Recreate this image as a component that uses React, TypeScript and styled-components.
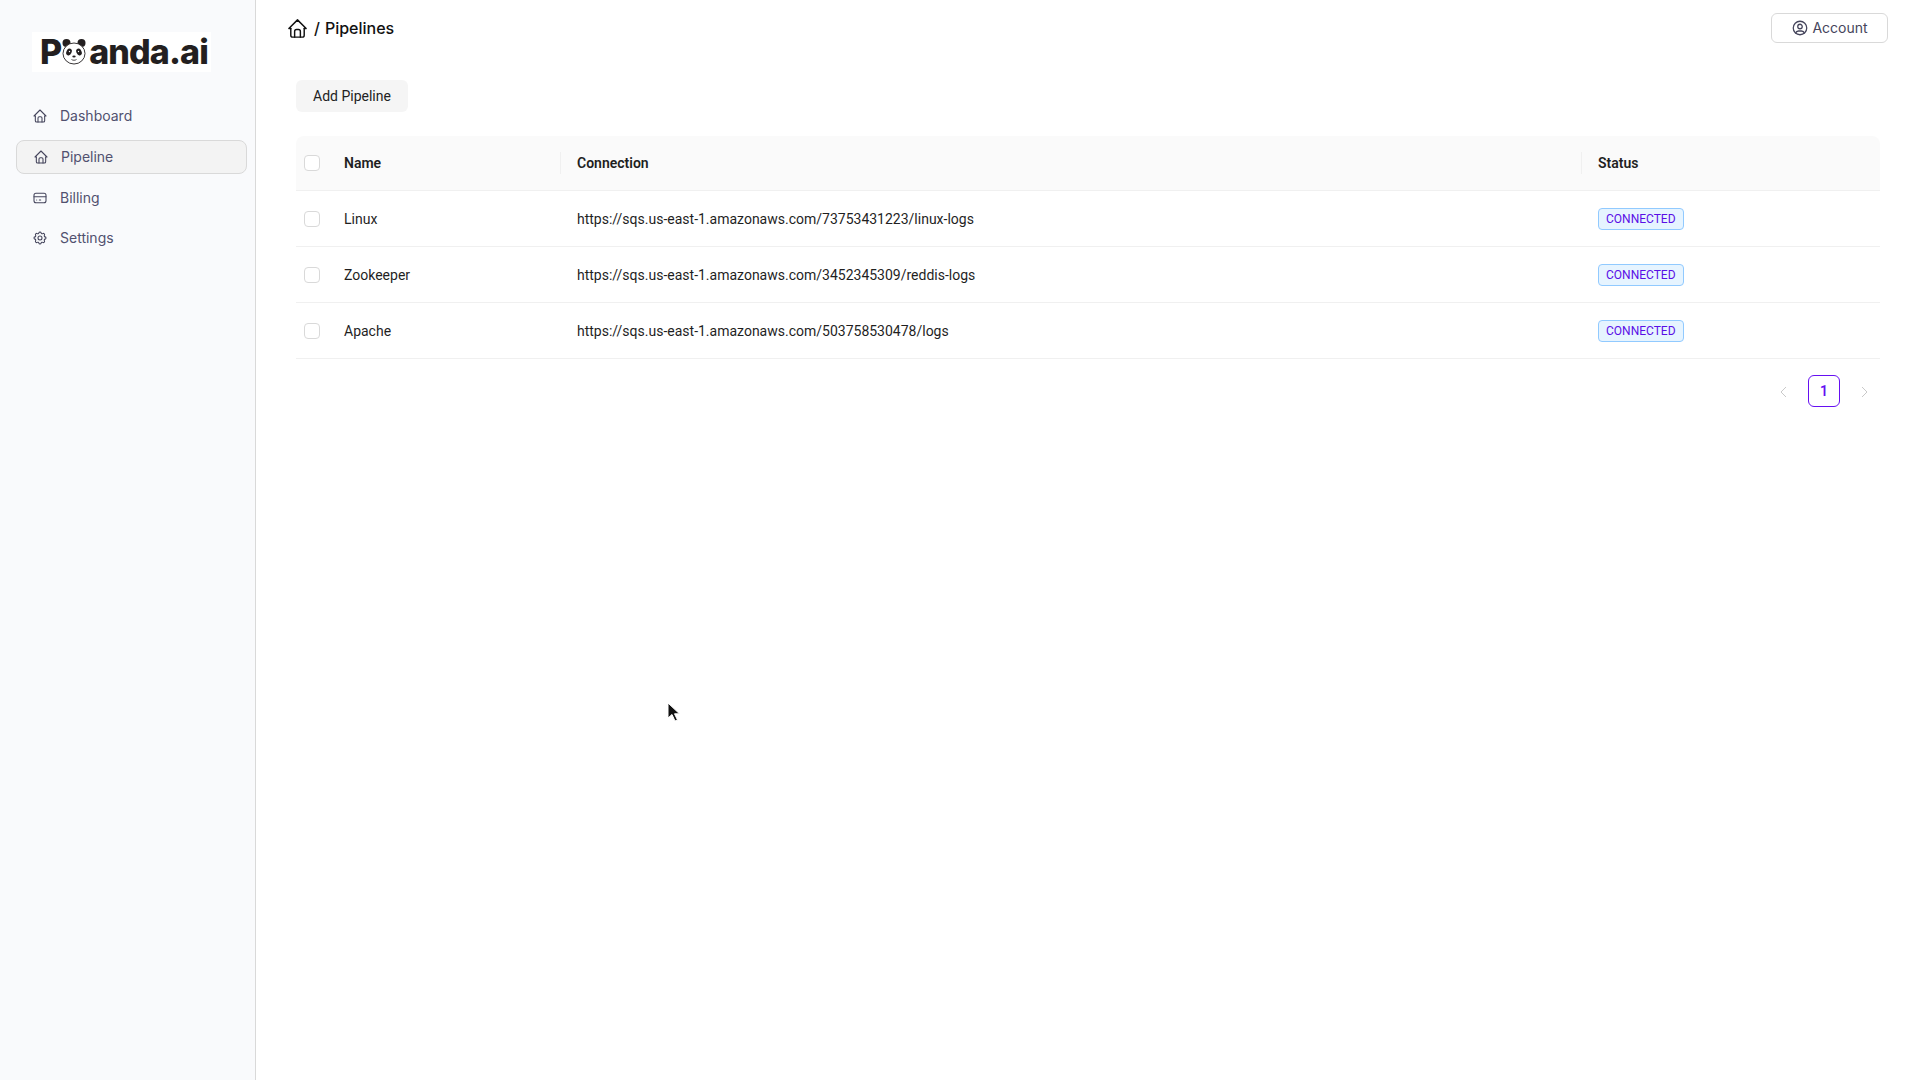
import styled, { createGlobalStyle } from 'styled-components'
import { TbCreditCard, TbHome, TbSettings, TbUserCircle } from 'react-icons/tb'

const GlobalStyle = createGlobalStyle`
  html, body {
    margin: 0;
    height: 100%;
    background: #fff;
    font-family: Roboto, "Liberation Sans", sans-serif;
  }
  * {
    box-sizing: border-box;
  }
`

const Page = styled.div`
  display: flex;
  position: relative;
  height: 1080px;
  overflow: hidden;
`

const Sidebar = styled.aside`
  width: 256px;
  flex: none;
  padding: 32px 8px 0 16px;
  background: #f9fafc;
  border-right: 1px solid #d9d9d9;
`

const LogoBox = styled.div`
  display: flex;
  align-items: center;
  width: 179px;
  height: 40px;
  margin: 0 0 27px 16px;
  padding-left: 8px;
  background: #fff;
  color: #231f20;
  font: 800 34px/40px Inter, sans-serif;
  letter-spacing: -0.9px;
`

const PandaIcon = styled.svg`
  width: 26px;
  height: 27px;
  margin: -1px 2px 0 0;
  flex: none;
`

const Nav = styled.nav`
  display: flex;
  flex-direction: column;
  gap: 7px;
`

const NavItem = styled.a<{ $active?: boolean }>`
  display: flex;
  align-items: center;
  gap: 12px;
  height: 34px;
  padding-left: ${p => (p.$active ? '16px' : '15px')};
  border: 1px solid ${p => (p.$active ? '#d9d9d9' : 'transparent')};
  border-radius: 8px;
  background: ${p => (p.$active ? '#f3f3f3' : 'transparent')};
  color: #51516f;
  font: 400 14px/20px Inter, sans-serif;
  &:last-child {
    margin-top: -1px;
  }
  svg {
    flex: none;
    width: 16px;
    height: 16px;
    color: #45455c;
    stroke-width: 1.6;
  }
`

const Main = styled.main`
  flex: 1;
  min-width: 0;
  display: flex;
  flex-direction: column;
  padding: 13px 40px 0;
`

const TopBar = styled.header`
  display: flex;
  align-items: center;
  justify-content: space-between;
  height: 30px;
`

const Crumbs = styled.div`
  display: flex;
  align-items: center;
  gap: 5px;
  margin-left: -10px;
  color: #111;
  font: 500 16px/24px Inter, sans-serif;
  svg {
    width: 23px;
    height: 23px;
    stroke-width: 1.5;
  }
`

const AccountButton = styled.button`
  display: flex;
  align-items: center;
  justify-content: center;
  gap: 3px;
  width: 117px;
  height: 30px;
  margin-right: -8px;
  padding: 0;
  border: 1px solid #d9d9d9;
  border-radius: 6px;
  background: #fff;
  color: #45455c;
  font: 400 14px/20px Inter, sans-serif;
  svg {
    width: 18px;
    height: 18px;
    stroke-width: 1.7;
  }
`

const AddButton = styled.button`
  width: 112px;
  height: 32px;
  margin: 37px 0 24px;
  padding: 0;
  border: 0;
  border-radius: 6px;
  background: #f5f5f5;
  color: #222;
  font: 400 14px/22px Roboto, sans-serif;
`

const Table = styled.div`
  display: flex;
  flex-direction: column;
  color: #1f1f1f;
  font: 400 14px/22px Roboto, sans-serif;
`

const Row = styled.div<{ $head?: boolean }>`
  display: grid;
  grid-template-columns: 32px 233px 1021px 1fr;
  align-items: center;
  height: ${p => (p.$head ? '55px' : '56px')};
  border-bottom: 1px solid #f0f0f0;
  background: ${p => (p.$head ? '#fafafa' : '#fff')};
  border-radius: ${p => (p.$head ? '8px 8px 0 0' : '0')};
  font-weight: ${p => (p.$head ? 600 : 400)};
`

const Cell = styled.div<{ $divider?: boolean }>`
  position: relative;
  padding: 0 16px;
  &::before {
    content: ${p => (p.$divider ? "''" : 'none')};
    position: absolute;
    left: -1px;
    top: 50%;
    width: 1px;
    height: 22px;
    transform: translateY(-50%);
    background: #f0f0f0;
  }
`

const CheckCell = styled.div`
  display: flex;
  padding-left: 8px;
`

const Check = styled.span`
  width: 16px;
  height: 16px;
  border: 1px solid #d9d9d9;
  border-radius: 4px;
  background: #fff;
`

const Badge = styled.span`
  display: inline-block;
  height: 22px;
  padding: 0 7px;
  border: 1px solid #91caff;
  border-radius: 4px;
  background: #e6f4ff;
  color: #5a0fe6;
  font-size: 12px;
  line-height: 20px;
`

const Pager = styled.div`
  display: flex;
  align-items: center;
  justify-content: flex-end;
  gap: 8px;
  margin-top: 16px;
`

const PagerArrow = styled.svg`
  width: 32px;
  height: 12px;
  margin-top: 2px;
  fill: none;
  stroke: #c9c9c9;
  stroke-width: 1;
`

const PageNumber = styled.span`
  width: 32px;
  height: 32px;
  border: 1px solid #6610f2;
  border-radius: 6px;
  color: #6610f2;
  font: 600 14px/30px Roboto, sans-serif;
  text-align: center;
`

const Cursor = styled.svg`
  position: absolute;
  left: 667px;
  top: 702px;
  width: 13px;
  height: 21px;
`

const rows = [
  { name: 'Linux', url: 'https://sqs.us-east-1.amazonaws.com/73753431223/linux-logs' },
  { name: 'Zookeeper', url: 'https://sqs.us-east-1.amazonaws.com/3452345309/reddis-logs' },
  { name: 'Apache', url: 'https://sqs.us-east-1.amazonaws.com/503758530478/logs' },
]

const Panda = () => (
  <PandaIcon viewBox="0 0 26 27">
    <circle cx="5.5" cy="5" r="4" fill="#231f20" />
    <circle cx="20.5" cy="5" r="4" fill="#231f20" />
    <ellipse cx="13" cy="15.5" rx="11" ry="10.5" fill="#fff" stroke="#231f20" strokeWidth="0.9" />
    <ellipse cx="8" cy="14" rx="2.6" ry="3.5" fill="#231f20" transform="rotate(25 8 14)" />
    <ellipse cx="18" cy="14" rx="2.6" ry="3.5" fill="#231f20" transform="rotate(-25 18 14)" />
    <circle cx="8.5" cy="13.5" r="0.7" fill="#fff" />
    <circle cx="17.5" cy="13.5" r="0.7" fill="#fff" />
    <ellipse cx="13" cy="18.5" rx="1.7" ry="1" fill="#231f20" />
    <path d="M10.5 21.5c1.5 1 3.5 1 5 0" fill="none" stroke="#231f20" strokeWidth="0.8" />
  </PandaIcon>
)

const App = () => (
  <>
    <GlobalStyle />
    <Page>
      <Sidebar>
        <LogoBox>
          P<Panda />anda.ai
        </LogoBox>
        <Nav>
          <NavItem><TbHome />Dashboard</NavItem>
          <NavItem $active><TbHome />Pipeline</NavItem>
          <NavItem><TbCreditCard />Billing</NavItem>
          <NavItem><TbSettings />Settings</NavItem>
        </Nav>
      </Sidebar>
      <Main>
        <TopBar>
          <Crumbs>
            <TbHome />
            <span>/</span>
            <span>Pipelines</span>
          </Crumbs>
          <AccountButton>
            <TbUserCircle />
            Account
          </AccountButton>
        </TopBar>
        <div>
          <AddButton>Add Pipeline</AddButton>
        </div>
        <Table>
          <Row $head>
            <CheckCell><Check /></CheckCell>
            <Cell>Name</Cell>
            <Cell $divider>Connection</Cell>
            <Cell $divider>Status</Cell>
          </Row>
          {rows.map(row => (
            <Row key={row.name}>
              <CheckCell><Check /></CheckCell>
              <Cell>{row.name}</Cell>
              <Cell>{row.url}</Cell>
              <Cell><Badge>CONNECTED</Badge></Cell>
            </Row>
          ))}
        </Table>
        <Pager>
          <PagerArrow viewBox="-12 0 32 12"><path d="M6 1 1 6l5 5" /></PagerArrow>
          <PageNumber>1</PageNumber>
          <PagerArrow viewBox="-13 0 32 12"><path d="M1 1l5 5-5 5" /></PagerArrow>
        </Pager>
      </Main>
      <Cursor viewBox="0 0 13 21">
        <path d="M1 1v15l4-3.5 3 6.5 2.5-1-3-6.2h5z" fill="#111" stroke="#fff" strokeWidth="1" />
      </Cursor>
    </Page>
  </>
)

export default App
